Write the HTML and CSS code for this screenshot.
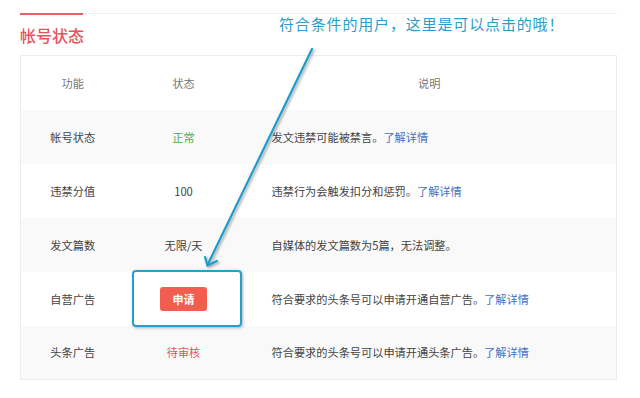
FILE: index.html
```html
<!DOCTYPE html>
<html lang="zh-CN">
<head>
    <meta charset="UTF-8">
    <title>帐号状态</title>
    <link rel="stylesheet" href="styles.css">
</head>
<body>
    <div class="page">
        <div class="rule">
            <div class="rule-red"></div>
            <div class="rule-rest"></div>
        </div>
        <h2 class="title">帐号状态</h2>

        <table class="status-table">
            <thead>
                <tr>
                    <th class="col-name">功能</th>
                    <th class="col-state">状态</th>
                    <th class="col-desc">说明</th>
                </tr>
            </thead>
            <tbody>
                <tr class="odd">
                    <td>帐号状态</td>
                    <td class="ok">正常</td>
                    <td class="desc">发文违禁可能被禁言。<a href="#">了解详情</a></td>
                </tr>
                <tr>
                    <td>违禁分值</td>
                    <td>100</td>
                    <td class="desc">违禁行为会触发扣分和惩罚。<a href="#">了解详情</a></td>
                </tr>
                <tr class="odd">
                    <td>发文篇数</td>
                    <td>无限/天</td>
                    <td class="desc">自媒体的发文篇数为5篇，无法调整。</td>
                </tr>
                <tr>
                    <td>自营广告</td>
                    <td><button class="apply-btn">申请</button></td>
                    <td class="desc">符合要求的头条号可以申请开通自营广告。<a href="#">了解详情</a></td>
                </tr>
                <tr class="odd">
                    <td>头条广告</td>
                    <td class="pending">待审核</td>
                    <td class="desc">符合要求的头条号可以申请开通头条广告。<a href="#">了解详情</a></td>
                </tr>
            </tbody>
        </table>
    </div>

    <!-- annotation overlay -->
    <div class="note">符合条件的用户，这里是可以点击的哦！</div>
    <div class="highlight"></div>
    <svg class="arrow" width="640" height="398" viewBox="0 0 640 398">
        <defs>
            <filter id="sh" x="-20%" y="-20%" width="140%" height="140%">
                <feDropShadow dx="1.5" dy="1.5" stdDeviation="1" flood-color="#000" flood-opacity="0.35"/>
            </filter>
        </defs>
        <g filter="url(#sh)" stroke="#1f9ccc" stroke-width="2.2" fill="none" stroke-linecap="round">
            <line x1="312" y1="49" x2="207.5" y2="265"/>
            <polyline points="205,257 207.5,265.5 217,261"/>
        </g>
    </svg>
</body>
</html>
```

FILE: styles.css
```css
* {
    box-sizing: border-box;
}
body {
    margin: 0;
    background: #fff;
    font-family: "Noto Sans CJK SC", "Noto Sans", sans-serif;
    color: #444;
}
.page {
    width: 597px;
    margin-left: 20px;
    padding-top: 13px;
}
.rule {
    display: flex;
    align-items: flex-start;
}
.rule-red {
    width: 63px;
    height: 2px;
    background: #ec5f66;
}
.rule-rest {
    flex: 1;
    height: 1px;
    background: #eee;
}
.title {
    margin: 8px 0 0;
    height: 32px;
    font-size: 16px;
    line-height: 24px;
    font-weight: 500;
    color: #e9525b;
}
.status-table {
    width: 597px;
    border-collapse: collapse;
    border: 1px solid #ececec;
    font-size: 11.2px;
    table-layout: fixed;
}
.status-table th,
.status-table td {
    height: 54px;
    padding: 0;
    text-align: center;
    vertical-align: middle;
    font-weight: normal;
}
.status-table th {
    height: 54px;
    color: #777;
}
.col-name {
    width: 104px;
}
.col-state {
    width: 118px;
}
.status-table tr.odd {
    background: #f9f9f9;
}
.status-table td.desc {
    text-align: left;
    padding-left: 29px;
}
.desc a {
    color: #3f72c4;
    text-decoration: none;
}
.ok {
    color: #4cad4f;
}
.pending {
    color: #e8505b;
}
.apply-btn {
    width: 47px;
    height: 24px;
    border: none;
    border-radius: 3px;
    background: #f35d4f;
    color: #fff;
    font-family: inherit;
    font-size: 11px;
    font-weight: bold;
    padding: 0;
    cursor: pointer;
}
.note {
    position: absolute;
    left: 279px;
    top: 13px;
    font-size: 15px;
    letter-spacing: 0.85px;
    line-height: 22px;
    color: #2a9dca;
}
.highlight {
    position: absolute;
    left: 132px;
    top: 270px;
    width: 110px;
    height: 57px;
    border: 2px solid #24a0cf;
    border-radius: 4px;
    box-shadow: 1px 1px 3px rgba(0, 0, 0, 0.3);
}
.arrow {
    position: absolute;
    left: 0;
    top: 0;
    pointer-events: none;
}
```
